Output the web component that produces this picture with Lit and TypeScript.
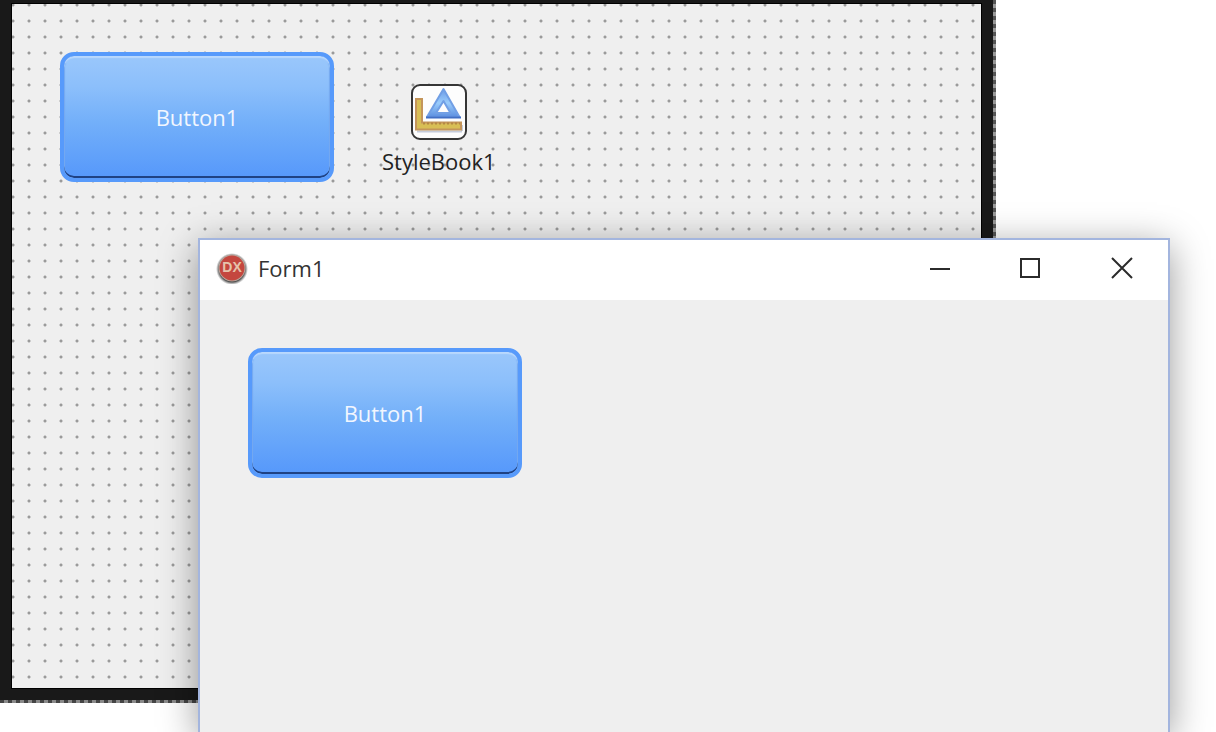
import { LitElement, html, css } from "lit";
import { customElement, property } from "lit/decorators.js";

const uiFont = css`"Segoe UI", "Open Sans", "Noto Sans", sans-serif`;

@customElement("styled-button")
class StyledButton extends LitElement {
  @property() caption = "";

  static styles = css`
    :host {
      display: block;
      flex: none;
    }
    .button {
      display: block;
      box-sizing: border-box;
      width: 274px;
      height: 130px;
      margin: 0;
      padding: 0;
      border: 4px solid #579afb;
      border-radius: 14px;
      background: linear-gradient(#9ac7fb, #8cbffb 25%, #72aff9 55%, #5698fb);
      background-clip: padding-box;
      background-color: #579afb;
      box-shadow: inset 0 2px 1px #b9d8fd, inset 0 -2px 0 #1f4284,
        inset 1px 0 1px #6ea5ee, inset -1px 0 1px #6ea5ee;
      color: #f2f6fe;
      font: 22px/30px ${uiFont};
    }
  `;

  render() {
    return html`<button class="button" type="button">${this.caption}</button>`;
  }
}

@customElement("form-designer")
class FormDesigner extends LitElement {
  static styles = css`
    :host {
      display: flex;
      box-sizing: border-box;
      padding: 0 3px 3px 0;
      background: repeating-linear-gradient(90deg, #444 0 4px, #8a8a8a 4px 8px)
          bottom / 100% 3px no-repeat,
        repeating-linear-gradient(#555 0 4px, #999 4px 8px) right / 3px 100%
          no-repeat;
    }
    .frame {
      flex: 1;
      display: flex;
      border: solid #191919;
      border-width: 4px 12px 12px 12px;
    }
    .surface {
      flex: 1;
      display: flex;
      align-items: flex-start;
      gap: 48px;
      padding: 48px;
      box-shadow: 0 0 0 1px #000;
      background: radial-gradient(
            circle at 8px 8px,
            #8c8c8c 0,
            #a0a0a0 1px,
            transparent 2px
          )
          9px 9px / 16px 16px,
        #efefef;
    }
    .component {
      display: flex;
      flex-direction: column;
      align-items: center;
      padding-top: 32px;
      gap: 6px;
      color: #222;
      font: 22px/30px ${uiFont};
    }
    .icon {
      display: block;
      width: 56px;
      height: 56px;
    }
  `;

  render() {
    return html`
      <div class="frame">
        <div class="surface">
          <styled-button caption="Button1"></styled-button>
          <div class="component">
            <svg class="icon" viewBox="0 0 56 56" aria-hidden="true">
              <defs>
                <linearGradient id="tri" x2="0" y2="1">
                  <stop offset="0" stop-color="#6c9be6" />
                  <stop offset=".5" stop-color="#9accfb" />
                  <stop offset="1" stop-color="#5c8fe0" />
                </linearGradient>
              </defs>
              <rect x="1" y="1" width="54" height="54" rx="8" fill="#fdfdfd" stroke="#363636" stroke-width="2" />
              <path d="M6 47.500H51M51 41V47" stroke="#c5ccdb" stroke-width="2" />
              <path d="M5 15H11V38.500H50V45.500H5Z" fill="#d8be55" stroke="#c4955a" stroke-width="2" />
              <path d="M12 39.500H49" stroke="#b48843" stroke-width="2" stroke-dasharray="2 2" />
              <path d="M32.500 5L48.500 33H16ZM32.500 17L25 29H39.500Z" fill="url(#tri)" fill-rule="evenodd" stroke="#719fe5" stroke-width="2" stroke-linejoin="round" />
              <path d="M15 33.500H50" stroke="#416fc5" stroke-width="2" />
            </svg>
            <span>StyleBook1</span>
          </div>
        </div>
      </div>
    `;
  }
}

@customElement("form-window")
class FormWindow extends LitElement {
  @property() caption = "";

  static styles = css`
    :host {
      display: flex;
      flex-direction: column;
      box-sizing: border-box;
      border: 2px solid #a3b5de;
      border-bottom: 0;
      background: #efefef;
      box-shadow: 0 8px 36px rgba(0, 0, 0, 0.4);
    }
    .titlebar {
      display: flex;
      align-items: center;
      box-sizing: border-box;
      height: 60px;
      padding: 0 0 4px 16px;
      background: #fff;
    }
    .logo {
      width: 32px;
      height: 32px;
      margin-right: 10px;
    }
    .initials {
      font: bold 14px "Liberation Sans", sans-serif;
    }
    .title {
      flex: 1;
      margin: 0;
      color: #333;
      font: 22px/30px ${uiFont};
    }
    .control {
      display: grid;
      place-items: center;
      width: 92px;
      height: 56px;
      padding: 0;
      border: 0;
      background: none;
    }
    .glyph {
      width: 24px;
      height: 24px;
      fill: none;
      stroke: #2b2b2b;
      stroke-width: 2;
    }
    .client {
      flex: 1;
      padding: 48px;
    }
  `;

  render() {
    return html`
      <header class="titlebar">
        <svg class="logo" viewBox="0 0 32 32" aria-hidden="true">
          <defs>
            <radialGradient id="rim">
              <stop offset=".8" stop-color="#444" />
              <stop offset="1" stop-color="#777" stop-opacity="0" />
            </radialGradient>
          </defs>
          <circle cx="16" cy="17" r="16" fill="url(#rim)" />
          <circle cx="16" cy="16" r="13.500" fill="#b9a79d" />
          <circle cx="16" cy="16" r="12.500" fill="#c4473f" />
          <text class="initials" x="16" y="20" text-anchor="middle" fill="#e6c3ac">DX</text>
        </svg>
        <h1 class="title">${this.caption}</h1>
        <button class="control" type="button" aria-label="Minimize">
          <svg class="glyph" viewBox="0 0 24 24"><path d="M4 13H24" /></svg>
        </button>
        <button class="control" type="button" aria-label="Maximize">
          <svg class="glyph" viewBox="0 0 24 24"><path d="M3 3H21V21H3Z" /></svg>
        </button>
        <button class="control" type="button" aria-label="Close">
          <svg class="glyph" viewBox="0 0 24 24"><path d="M2 2L22 22M22 2L2 22" /></svg>
        </button>
      </header>
      <div class="client">
        <styled-button caption="Button1"></styled-button>
      </div>
    `;
  }
}

@customElement("app-root")
class AppRoot extends LitElement {
  static styles = css`
    :host {
      display: block;
      position: relative;
      height: 100vh;
      overflow: hidden;
      background: #fff;
    }
    .designer {
      position: absolute;
      inset: 0 220px 29px 0;
    }
    .running {
      position: absolute;
      inset: 238px 46px 0 198px;
    }
  `;

  render() {
    return html`
      <form-designer class="designer"></form-designer>
      <form-window class="running" caption="Form1"></form-window>
    `;
  }
}
